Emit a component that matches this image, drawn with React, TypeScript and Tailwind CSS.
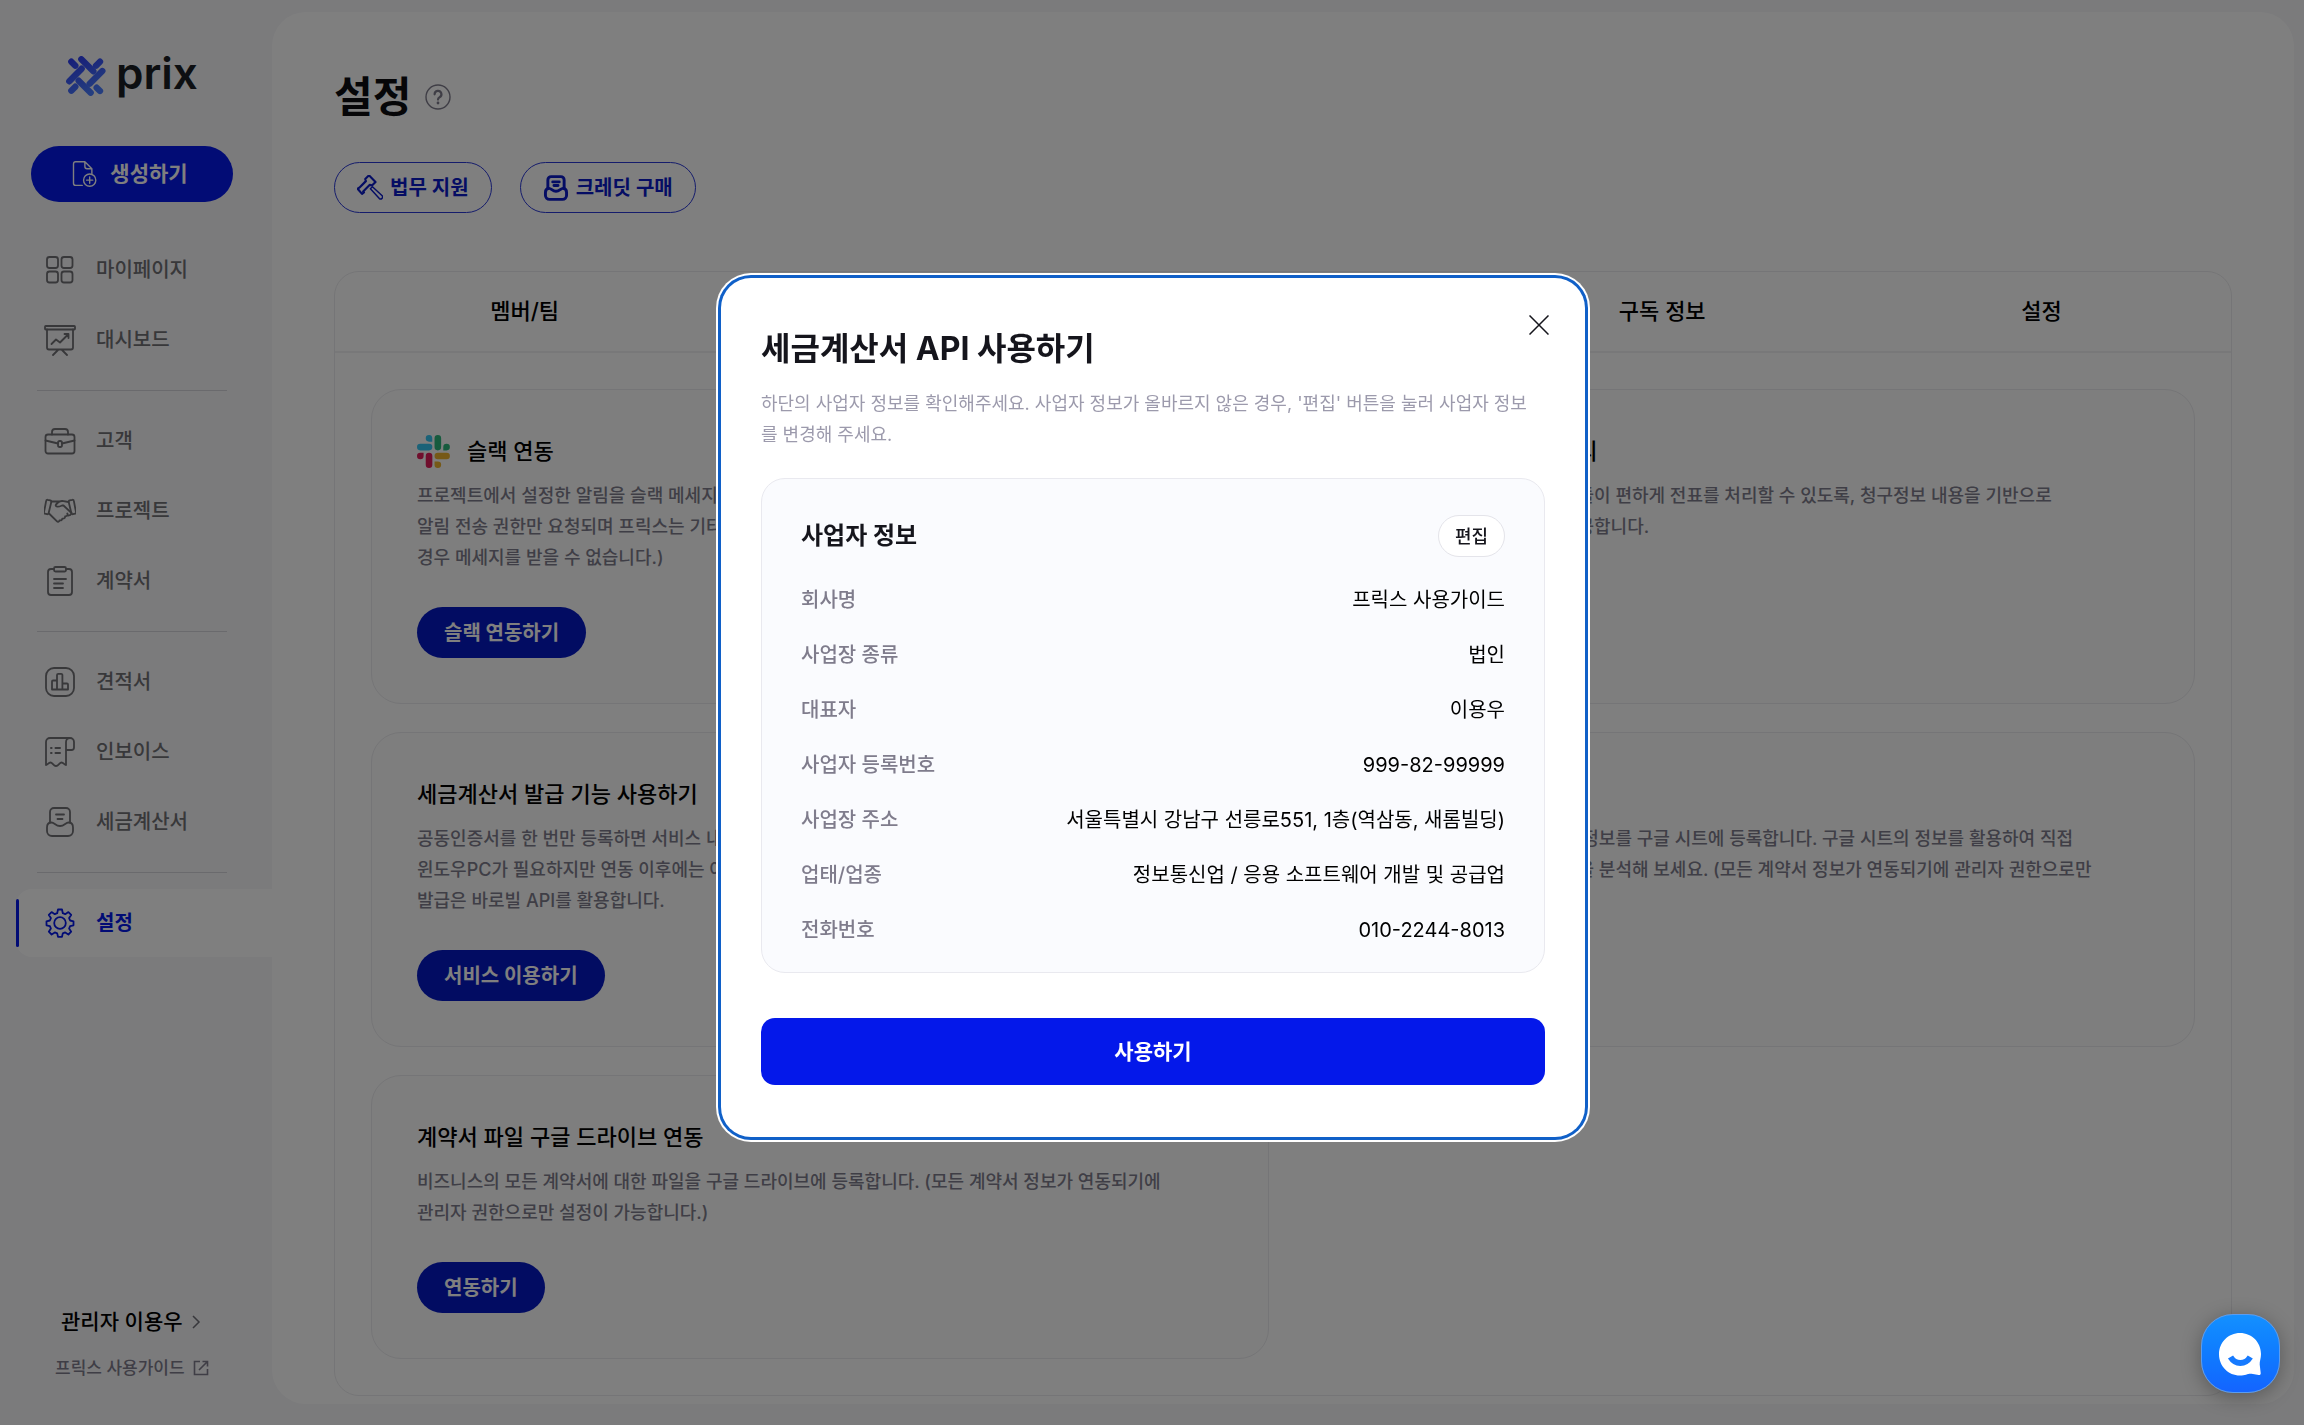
import { useState } from "react";
import type { ReactNode } from "react";
import clsx from "clsx";

// Shared wrapper for the line icons
const Icon = ({
  children,
  size = 32,
  width = 1.5,
  className,
}: {
  children: ReactNode;
  size?: number;
  width?: number;
  className?: string;
}) => (
  <svg
    width={size}
    height={size}
    viewBox="0 0 32 32"
    fill="none"
    stroke="currentColor"
    strokeWidth={width}
    strokeLinecap="round"
    strokeLinejoin="round"
    className={clsx("shrink-0", className)}
    aria-hidden="true"
  >
    {children}
  </svg>
);

const GridIcon = () => (
  <Icon width={1.8}>
    <rect x="3" y="3" width="11" height="11" rx="2.5" />
    <rect x="17.5" y="3" width="11" height="11" rx="2.5" />
    <rect x="3" y="17.5" width="11" height="11" rx="2.5" />
    <rect x="17.5" y="17.5" width="11" height="11" rx="2.5" />
  </Icon>
);

const BoardIcon = () => (
  <Icon width={1.8}>
    <rect x="1" y="2" width="30" height="3.5" rx="0.8" />
    <path d="M3 5.5v18a2 2 0 0 0 2 2h22a2 2 0 0 0 2-2v-18M14.5 25.5 9 31M17.5 25.5 23 31" />
    <path d="m7.5 20 4.5-4.5 4 3 8-8M20.5 10h4v4" />
  </Icon>
);

const BriefcaseIcon = () => (
  <Icon width={1.8}>
    <rect x="1.5" y="9.5" width="29" height="19" rx="2.5" />
    <path d="M8 9.5V7a3 3 0 0 1 3-3h10a3 3 0 0 1 3 3v2.500M1.5 15.5l12.500 3M30.5 15.5l-12.500 3" />
    <rect x="14" y="16" width="4" height="6" rx="1.8" />
  </Icon>
);

const HandshakeIcon = () => (
  <Icon width={1.8}>
    <path d="m3.600 4.800 2.700.6a1.300 1.300 0 0 1 1 1.600L4.600 18.200a1.300 1.300 0 0 1-1.600 1L.8 18.600a1.100 1.100 0 0 1-.8-1.400L2.200 5.700a1.100 1.100 0 0 1 1.400-.9ZM28.400 4.800l-2.700.6a1.300 1.300 0 0 0-1 1.600l2.700 11.200a1.300 1.300 0 0 0 1.600 1l2.200-.6a1.100 1.100 0 0 0 .8-1.400L29.800 5.700a1.100 1.100 0 0 0-1.400-.9Z" />
    <path d="M7.500 6.500h8.500M24.500 7l-5-.9c-2.600-.4-4.300.2-5.500 1.400l-2 2c-.8 1 0 2.300 1.800 2.200 1.900-.1 3-.7 4.200-1.200h1.500l8 7.500M5 18.500l8 7.800c.9.9 2.300.3 2.500-1 1.600.5 2.800-.4 2.800-1.700 1.800.3 3-.8 2.800-2.300 2 .1 3-1.300 2.200-2.800M23.500 20.500c1.800.2 3.500-.7 4-2" />
  </Icon>
);

const ClipboardIcon = () => (
  <Icon width={1.8}>
    <path d="M10 4H7a3 3 0 0 0-3 3v20a3 3 0 0 0 3 3h18a3 3 0 0 0 3-3V7a3 3 0 0 0-3-3h-3" />
    <rect x="10" y="2" width="12" height="4.5" rx="1.5" />
    <path d="M10 14h12M10 18.5h9M10 23h9" />
  </Icon>
);

const ChartIcon = () => (
  <Icon width={1.8}>
    <rect x="2" y="2" width="28" height="28" rx="8" />
    <path d="M8 23.500v-8a1 1 0 0 1 1-1h4v9M13 23.500V9a1.200 1.200 0 0 1 1.200-1.200h3A1.200 1.200 0 0 1 18.400 9v14.500M18.400 17.500H23a1 1 0 0 1 1 1v5H8" />
  </Icon>
);

const InvoiceIcon = () => (
  <Icon width={1.8}>
    <path d="M26 2H6a4 4 0 0 0-4 4v23c1.500 0 2.500-2.500 4.500-2.500S9.500 30 12 30s3.500-3.500 5.500-3.500S20.500 29 22 29V6a4 4 0 0 1 4-4 4 4 0 0 1 4 4v5.500a2.500 2.500 0 0 1-2.500 2.500H22" />
    <path d="M11.500 12h4.500M11.500 17h4.500M7 12h.6M7 17h.6" strokeWidth="2" />
  </Icon>
);

const InboxPaths = () => (
  <>
    <path d="M6 16.500V6a4 4 0 0 1 4-4h12a4 4 0 0 1 4 4v10.500" />
    <path d="M3 21.500c0-3 1.500-5 4.500-5s4 3.500 8.500 3.500 5.500-3.500 8.500-3.500 4.500 2 4.500 5V25a5 5 0 0 1-5 5H8a5 5 0 0 1-5-5Z" />
    <path d="M12 8.500h8M13.500 13h5" />
  </>
);

const InboxIcon = () => (
  <Icon width={1.8}>
    <InboxPaths />
  </Icon>
);

const GearIcon = () => (
  <Icon width={1.8}>
    <circle cx="16" cy="16" r="5.8" />
    <path d="M14 2.500h4l.8 3.700 2.400 1 3.200-2.100 2.800 2.800-2.100 3.200 1 2.400 3.400.8v4l-3.400.8-1 2.400 2.100 3.200-2.800 2.800-3.200-2.100-2.400 1-.8 3.400h-4l-.8-3.400-2.400-1-3.200 2.100-2.800-2.800 2.100-3.200-1-2.400-3.400-.8v-4l3.400-.8 1-2.400-2.100-3.200 2.800-2.800 3.200 2.100 2.400-1Z" />
  </Icon>
);

const Logo = () => (
  <svg width="40" height="40" viewBox="0 0 120 120" fill="none" strokeWidth="19" strokeLinecap="round" aria-hidden="true">
    <defs>
      <linearGradient id="logo" x1="0" y1="0" x2="60" y2="120" gradientUnits="userSpaceOnUse">
        <stop stopColor="#2b36f0" />
        <stop offset="1" stopColor="#4a7dff" />
      </linearGradient>
    </defs>
    <g stroke="url(#logo)">
      <path d="M16 17 28 29M46 10l36 36M38 74l36 36M92 95l10 10" />
      <path d="M47 38 10 76M109 45 71 83M102 17 90 29M16 104l12-12" />
    </g>
  </svg>
);

const SlackLogo = () => (
  <svg width="33" height="33" viewBox="0 0 54 54" className="shrink-0" aria-hidden="true">
    <path fill="#36C5F0" d="M19.700.1a5.400 5.400 0 0 0 0 10.800H25V5.500A5.400 5.400 0 0 0 19.700.1m0 14.300H5.400a5.400 5.400 0 0 0 0 10.800h14.300a5.400 5.400 0 0 0 0-10.800" />
    <path fill="#2EB67D" d="M53.800 19.800a5.400 5.400 0 0 0-10.800 0v5.400h5.400a5.400 5.400 0 0 0 5.400-5.400m-14.300 0V5.500a5.400 5.400 0 0 0-10.800 0v14.300a5.400 5.400 0 0 0 10.800 0" />
    <path fill="#ECB22E" d="M34.100 54a5.400 5.400 0 0 0 0-10.800h-5.400v5.400a5.400 5.400 0 0 0 5.400 5.400m0-14.300h14.300a5.400 5.400 0 0 0 0-10.800H34.100a5.400 5.400 0 0 0 0 10.800" />
    <path fill="#E01E5A" d="M0 34.300a5.400 5.400 0 0 0 10.800 0v-5.400H5.400A5.400 5.400 0 0 0 0 34.300m14.300 0v14.300a5.400 5.400 0 0 0 10.800 0V34.300a5.400 5.400 0 0 0-10.800 0" />
  </svg>
);

const menu = [
  [
    { label: "마이페이지", icon: <GridIcon /> },
    { label: "대시보드", icon: <BoardIcon /> },
  ],
  [
    { label: "고객", icon: <BriefcaseIcon /> },
    { label: "프로젝트", icon: <HandshakeIcon /> },
    { label: "계약서", icon: <ClipboardIcon /> },
  ],
  [
    { label: "견적서", icon: <ChartIcon /> },
    { label: "인보이스", icon: <InvoiceIcon /> },
    { label: "세금계산서", icon: <InboxIcon /> },
  ],
];

const tabs = ["멤버/팀", "회사 정보", "결제 정보", "구독 정보", "설정"];

const cards = [
  {
    title: "슬랙 연동",
    logo: true,
    desc: "프로젝트에서 설정한 알림을 슬랙 메세지로 받을 수 있습니다. (연동 시에는\n알림 전송 권한만 요청되며 프릭스는 기타 정보를 볼 수 없습니다. 미연동\n경우 메세지를 받을 수 없습니다.)",
    action: "슬랙 연동하기",
  },
  {
    title: "고객사 세금계산서 전표처리",
    desc: "세금 업무를 하는 고객사 담당자들이 편하게 전표를 처리할 수 있도록, 청구정보 내용을 기반으로\n자동으로 만든 전표용 파일을 제공합니다.",
  },
  {
    title: "세금계산서 발급 기능 사용하기",
    desc: "공동인증서를 한 번만 등록하면 서비스 내에서 발급할 수 있습니다. 최초에는\n윈도우PC가 필요하지만 연동 이후에는 어디서나 사용할 수 있습니다.\n발급은 바로빌 API를 활용합니다.",
    action: "서비스 이용하기",
  },
  {
    title: "구글 시트 연동",
    desc: "프릭스에 쌓인 모든 고객 계약서 정보를 구글 시트에 등록합니다. 구글 시트의 정보를 활용하여 직접\n원하는 대로 우리 회사의 실적들을 분석해 보세요. (모든 계약서 정보가 연동되기에 관리자 권한으로만\n설정이 가능합니다.)",
    action: "연동하기",
  },
  {
    title: "계약서 파일 구글 드라이브 연동",
    desc: "비즈니스의 모든 계약서에 대한 파일을 구글 드라이브에 등록합니다. (모든 계약서 정보가 연동되기에\n관리자 권한으로만 설정이 가능합니다.)",
    action: "연동하기",
  },
];

const companyInfo = [
  ["회사명", "프릭스 사용가이드"],
  ["사업장 종류", "법인"],
  ["대표자", "이용우"],
  ["사업자 등록번호", "999-82-99999"],
  ["사업장 주소", "서울특별시 강남구 선릉로551, 1층(역삼동, 새롬빌딩)"],
  ["업태/업종", "정보통신업 / 응용 소프트웨어 개발 및 공급업"],
  ["전화번호", "010-2244-8013"],
];

const Sidebar = () => (
  <aside className="flex w-[272px] shrink-0 flex-col pt-[52px] pb-[42px]">
    <a href="#" className="flex h-[48px] items-center gap-[10px] pl-[66px] text-[#1b1f24]">
      <Logo />
      <span className="pb-[6px] text-[44px] leading-[48px] font-semibold">prix</span>
    </a>
    <button className="mt-[46px] mr-[39px] ml-[31px] flex h-[56px] items-center justify-center gap-[12px] rounded-full bg-[#0418ea] pr-[6px] text-[21px] font-bold text-white">
      <Icon size={28} width={1.6}>
        <path d="M14 29H6.500A2.500 2.500 0 0 1 4 26.500v-22A2.500 2.500 0 0 1 6.500 2H17l8 8v5.500M17 2v5.500a2.500 2.500 0 0 0 2.500 2.500H25" />
        <circle cx="22.5" cy="23" r="7" />
        <path d="M22.500 19.500v7M19 23h7" />
      </Icon>
      생성하기
    </button>
    <nav className="mt-[34px] text-[20px] font-medium text-[#707074]">
      {menu.map((group, idx) => (
        <div key={idx}>
          <ul className="flex flex-col gap-[2px]">
            {group.map((item) => (
              <li key={item.label}>
                <a href="#" className="flex h-[68px] items-center gap-[20px] pl-[44px]">
                  {item.icon}
                  {item.label}
                </a>
              </li>
            ))}
          </ul>
          <hr className="my-[16px] mr-[45px] ml-[37px] border-[#d4d4da]" />
        </div>
      ))}
      <a
        href="#"
        className="ml-[16px] flex h-[68px] items-center rounded-l-[16px] bg-white font-semibold text-[#0418ea]"
      >
        <span className="h-[48px] w-[3px] rounded-full bg-[#0418ea]" />
        <span className="ml-[25px] flex items-center gap-[20px]">
          <GearIcon />
          설정
        </span>
      </a>
    </nav>
    <div className="mt-auto flex flex-col items-start gap-[16px]">
      <button className="ml-[61px] flex items-center gap-[8px] text-[21px] leading-[30px] font-medium text-black">
        관리자 이용우
        <svg width="10" height="14" viewBox="0 0 10 14" fill="none" stroke="#707078" strokeWidth="1.5" aria-hidden="true">
          <path d="m2 1 6 6-6 6" />
        </svg>
      </button>
      <a href="#" className="ml-[55px] flex items-center gap-[8px] text-[17px] leading-[30px] font-medium text-[#7f7c8c]">
        프릭스 사용가이드
        <svg width="16" height="16" viewBox="0 0 16 16" fill="none" stroke="currentColor" strokeWidth="1.6" aria-hidden="true">
          <path d="M7 1.500H1.500v13h13V9M9.500 1.500h5v5M14.500 1.500 6 10" />
        </svg>
      </a>
    </div>
  </aside>
);

const Modal = ({ onClose }: { onClose: () => void }) => (
  <div className="fixed inset-0 flex items-center justify-center bg-black/50 pb-[10px] pl-[2px]">
    <div
      role="dialog"
      aria-modal="true"
      aria-labelledby="modal-title"
      className="relative w-[864px] rounded-[30px] bg-white px-[40px] pt-[47px] pb-[52px] shadow-[0_0_0_3px_#1060c8,0_0_0_5px_#ffffff]"
    >
      <button
        onClick={onClose}
        aria-label="닫기"
        className="absolute top-[27px] right-[26px] flex size-[40px] items-center justify-center text-[#15151c]"
      >
        <svg width="20" height="20" viewBox="0 0 20 20" stroke="currentColor" strokeWidth="1.5" aria-hidden="true">
          <path d="M.5.5l19 19M19.500.5l-19 19" />
        </svg>
      </button>
      <h2 id="modal-title" className="text-[32px] leading-[48px] font-bold text-[#15151c]">
        세금계산서 API 사용하기
      </h2>
      <p className="mt-[15px] text-[18px] leading-[31px] whitespace-pre-line text-[#9c9aac]">
        {"하단의 사업자 정보를 확인해주세요. 사업자 정보가 올바르지 않은 경우, '편집' 버튼을 눌러 사업자 정보\n를 변경해 주세요."}
      </p>

      <section className="mt-[28px] rounded-[24px] border border-[#e9e9ef] bg-[#fafbfe] px-[39px] pt-[36px] pb-[27px]">
        <div className="flex items-center justify-between">
          <h3 className="text-[24px] leading-[40px] font-bold text-[#15151c]">사업자 정보</h3>
          <button className="h-[42px] rounded-full border border-[#e4e4ea] bg-white px-[16px] text-[18px] font-medium text-[#15151c]">
            편집
          </button>
        </div>
        <dl className="mt-[28px] flex flex-col gap-[25px] text-[20px] leading-[30px]">
          {companyInfo.map(([label, value]) => (
            <div key={label} className="flex justify-between">
              <dt className="font-medium text-[#7f7c8c]">{label}</dt>
              <dd className="text-black">{value}</dd>
            </div>
          ))}
        </dl>
      </section>

      <button className="mt-[45px] h-[67px] w-full rounded-[14px] bg-[#0418ea] text-[21px] font-bold text-white">
        사용하기
      </button>
    </div>
  </div>
);

const App = () => {
  const [showModal, setShowModal] = useState(true);

  return (
    <div className="flex min-h-screen bg-[#f6f6f9] font-['Inter','Noto_Sans_CJK_KR',sans-serif]">
      <Sidebar />

      <main className="mt-[12px] mr-[10px] mb-[21px] flex-1 rounded-[34px] bg-white px-[62px] pt-[54px] pb-[8px]">
        <div className="flex items-center gap-[14px]">
          <h1 className="text-[42px] leading-[62px] font-bold text-[#0c0c10]">설정</h1>
          <button aria-label="도움말" className="text-[#7f7c8c]">
            <svg width="26" height="26" viewBox="0 0 26 26" fill="none" stroke="currentColor" strokeLinecap="round" aria-hidden="true">
              <circle cx="13" cy="13" r="12" strokeWidth="1.4" />
              <path d="M9.600 10.300a3.400 3.400 0 1 1 5 3c-1.100.6-1.600 1.200-1.600 2.300" strokeWidth="2.2" />
              <circle cx="13" cy="19" r="1.4" fill="currentColor" stroke="none" />
            </svg>
          </button>
        </div>

        <div className="mt-[34px] flex gap-[28px] text-[20px] font-semibold text-[#0a1ac8]">
          <button className="flex h-[51px] items-center gap-[7px] rounded-full border border-[#2a38d8] px-[22px]">
            <Icon size={26} width={1.8}>
              <path d="m3 17.500 8.500-8.500-.8-2.800L15.500 1.500l8.500 8.500-4.600 4.600-2.800-.8L8 22.300l1 1.200-2.500 2L.8 18.900Z" strokeWidth="2.8" transform="translate(0 -1) scale(.95)" />
              <path d="m16.500 17 2.500-2.500L31 25.500a2.500 2.500 0 0 1-3.500 3.500Z" />
            </Icon>
            법무 지원
          </button>
          <button className="flex h-[51px] items-center gap-[7px] rounded-full border border-[#2a38d8] px-[22px]">
            <Icon size={26} width={3.6}>
              <InboxPaths />
            </Icon>
            크레딧 구매
          </button>
        </div>

        <section className="mt-[58px] rounded-[25px] border border-[#ebebee]">
          <div role="tablist" className="grid grid-cols-5 border-b-2 border-[#f0f0f2]">
            {tabs.map((tab) => (
              <button key={tab} role="tab" className="h-[79px] text-[22px] font-medium text-black">
                {tab}
              </button>
            ))}
          </div>
          <div className="grid grid-cols-2 gap-[28px] p-[36px]">
            {cards.map((card) => (
              <article key={card.title} className="rounded-[30px] border border-[#ebebee] bg-[#fcfcfd] p-[45px]">
                <div className="flex h-[33px] items-center gap-[17px]">
                  {card.logo && <SlackLogo />}
                  <h2 className="text-[22px] font-medium text-black">{card.title}</h2>
                </div>
                <p className="mt-[12px] text-[18px] leading-[31px] font-medium whitespace-pre-line text-[#7f7c8c]">
                  {card.desc}
                </p>
                {card.action && (
                  <button className="mt-[34px] h-[51px] rounded-full bg-[#0418c4] px-[27px] text-[20px] font-bold text-white">
                    {card.action}
                  </button>
                )}
              </article>
            ))}
          </div>
        </section>
      </main>

      {showModal && <Modal onClose={() => setShowModal(false)} />}

      {/* Chat launcher */}
      <button
        aria-label="채팅 상담"
        className="fixed right-[24px] bottom-[32px] size-[79px] rounded-[32px] border border-[#5a9cf0] bg-linear-to-b from-[#1490ff] to-[#1464ff] shadow-[0_4px_20px_rgba(0,0,0,0.3)]"
      >
        <svg width="77" height="77" viewBox="0 0 77 77" aria-hidden="true">
          <path
            fill="#fff"
            d="M38 18c11.800 0 21 9.300 21 21 0 4.500-1.500 7-1.300 10.500l1 8.500c.2 1.500-.8 2.200-2 2l-7.200-1.200c-3.500-.4-6 1.700-11.500 1.700-11.700 0-21-9.500-21-21.300S26.300 18 38 18Z"
          />
          <path fill="none" stroke="#167aff" strokeWidth="6" d="M28.500 42c2.500 4 5.800 6 9.800 6s7.500-2 10-6" />
        </svg>
      </button>
    </div>
  );
};

export default App;
